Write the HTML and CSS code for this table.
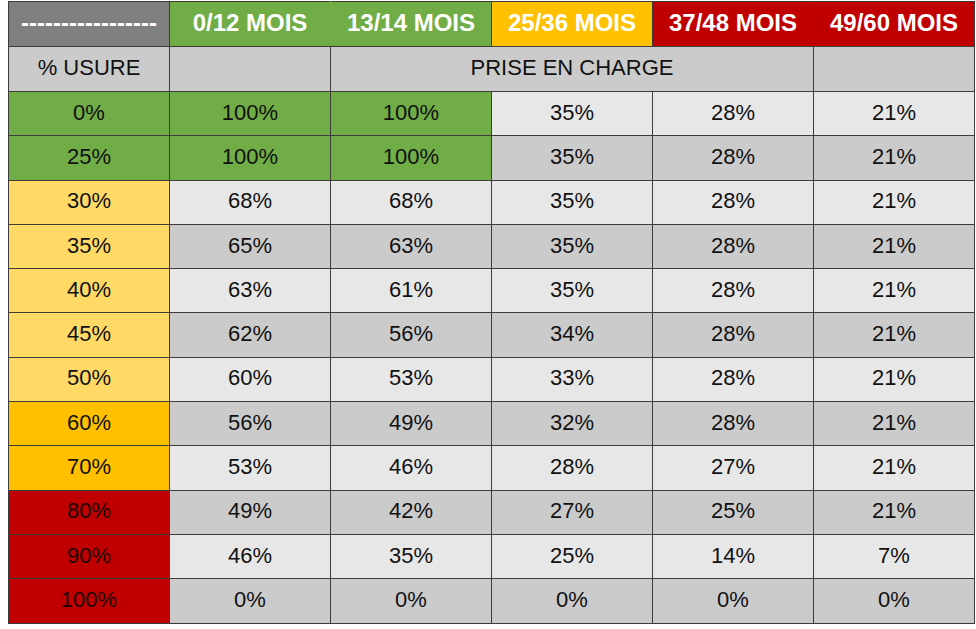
FILE: index.html
```html
<!DOCTYPE html>
<html lang="fr">
<head>
<meta charset="utf-8">
<title>Prise en charge</title>
<link rel="stylesheet" href="styles.css">
</head>
<body>
<table class="grid">
  <colgroup>
    <col class="c"><col class="c"><col class="c"><col class="c"><col class="c"><col class="c">
  </colgroup>
  <thead>
    <tr class="head">
      <th class="gray">-----------------</th>
      <th class="green no-r">0/12 MOIS</th>
      <th class="green no-l">13/14 MOIS</th>
      <th class="orange">25/36 MOIS</th>
      <th class="red no-r">37/48 MOIS</th>
      <th class="red no-l">49/60 MOIS</th>
    </tr>
    <tr class="sub">
      <td>% USURE</td>
      <td></td>
      <td colspan="3">PRISE EN CHARGE</td>
      <td></td>
    </tr>
  </thead>
  <tbody>
    <tr class="row light"><td class="k-green">0%</td><td class="green">100%</td><td class="green">100%</td><td>35%</td><td>28%</td><td>21%</td></tr>
    <tr class="row dark"><td class="k-green">25%</td><td class="green">100%</td><td class="green">100%</td><td>35%</td><td>28%</td><td>21%</td></tr>
    <tr class="row light"><td class="k-yellow">30%</td><td>68%</td><td>68%</td><td>35%</td><td>28%</td><td>21%</td></tr>
    <tr class="row dark"><td class="k-yellow">35%</td><td>65%</td><td>63%</td><td>35%</td><td>28%</td><td>21%</td></tr>
    <tr class="row light"><td class="k-yellow">40%</td><td>63%</td><td>61%</td><td>35%</td><td>28%</td><td>21%</td></tr>
    <tr class="row dark"><td class="k-yellow">45%</td><td>62%</td><td>56%</td><td>34%</td><td>28%</td><td>21%</td></tr>
    <tr class="row light"><td class="k-yellow">50%</td><td>60%</td><td>53%</td><td>33%</td><td>28%</td><td>21%</td></tr>
    <tr class="row dark"><td class="k-orange">60%</td><td>56%</td><td>49%</td><td>32%</td><td>28%</td><td>21%</td></tr>
    <tr class="row light"><td class="k-orange">70%</td><td>53%</td><td>46%</td><td>28%</td><td>27%</td><td>21%</td></tr>
    <tr class="row dark"><td class="k-red">80%</td><td>49%</td><td>42%</td><td>27%</td><td>25%</td><td>21%</td></tr>
    <tr class="row light"><td class="k-red">90%</td><td>46%</td><td>35%</td><td>25%</td><td>14%</td><td>7%</td></tr>
    <tr class="row dark"><td class="k-red">100%</td><td>0%</td><td>0%</td><td>0%</td><td>0%</td><td>0%</td></tr>
  </tbody>
</table>
</body>
</html>
```
FILE: styles.css
```css
html, body {
  margin: 0;
  padding: 0;
  background: #ffffff;
}
body {
  padding: 1px 0 0 8px;
  font-family: "Liberation Sans", Arial, sans-serif;
}
.grid {
  border-collapse: collapse;
  table-layout: fixed;
  width: 967px;
}
.grid .c { width: 161px; }
.grid th, .grid td {
  border: 1px solid #3c3c3c;
  padding: 0 0 2px 0;
  text-align: center;
  vertical-align: middle;
  white-space: nowrap;
  overflow: hidden;
}
.head th {
  height: 42px;
  font-size: 24px;
  font-weight: bold;
  color: #ffffff;
}
.head .gray { background: #7f7f7f; }
.head .green { background: #70ad47; }
.head .orange { background: #ffc000; }
.head .red { background: #c00000; }
.head .green.no-r { border-right-color: #70ad47; }
.head .green.no-l { border-left-color: #70ad47; }
.head .red.no-r { border-right-color: #c00000; }
.head .red.no-l { border-left-color: #c00000; }
.sub td {
  height: 42px;
  font-size: 22px;
  color: #111111;
  background: #cbcbcb;
}
.row td {
  height: 41.3px;
  font-size: 22px;
  color: #111111;
}
.row.light td { background: #e7e7e7; }
.row.dark td { background: #cbcbcb; }
.row td.green { background: #70ad47; }
.row td.k-green { background: #70ad47; }
.row td.k-yellow { background: #ffd966; }
.row td.k-orange { background: #ffc000; }
.row td.k-red { background: #c00000; color: #1a0000; }
```
